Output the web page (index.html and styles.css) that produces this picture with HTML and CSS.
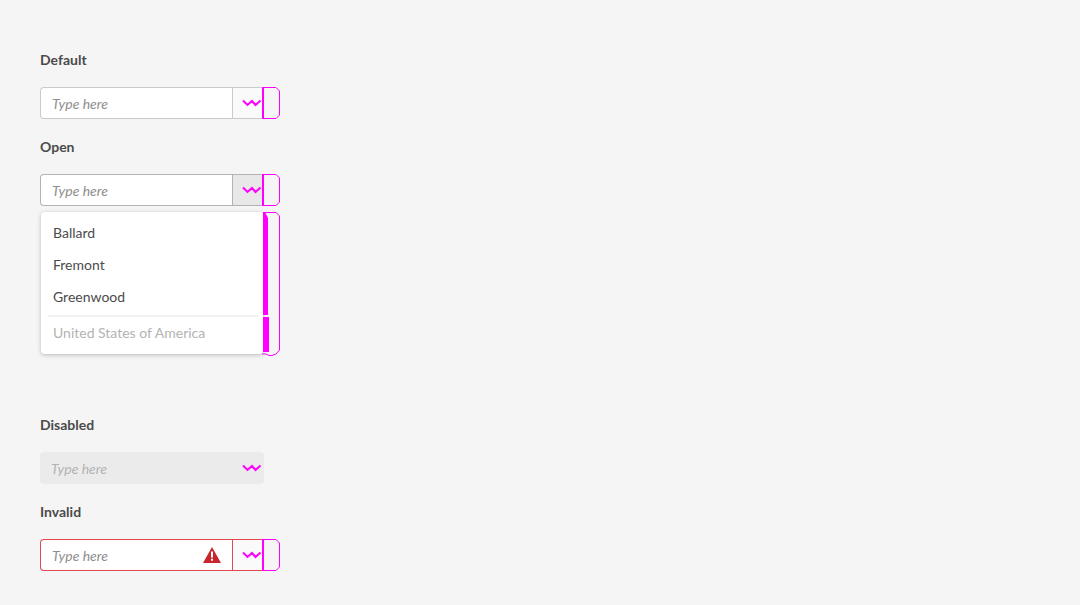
FILE: index.html
```html
<!DOCTYPE html>
<html lang="en">
<head>
<meta charset="UTF-8">
<title>Combobox</title>
<link rel="stylesheet" href="styles.css">
</head>
<body>
<svg class="defs" width="0" height="0">
	<symbol id="wave" viewBox="0 0 20 8"><path d="M1 1.5 L5.500 6 L10 2 L13.500 6 L18.500 1.500" fill="none" stroke="#ff00ff" stroke-width="2"/></symbol>
	<symbol id="cap" viewBox="0 0 18 32"><path d="M1 0.500 H14 L17.500 4 V28 L14 31.500 H1 M1 0.500 V31.500" fill="none" stroke="#ff00ff" stroke-width="1"/><path d="M1 0 V32" stroke="#ff00ff" stroke-width="2"/></symbol>
</svg>

<div class="page">
	<div class="field">
		<div class="label">Default</div>
		<div class="combo">
			<div class="input">Type here</div>
			<div class="btn"></div>
			<svg class="wave"><use href="#wave"/></svg>
			<svg class="cap"><use href="#cap"/></svg>
		</div>
	</div>

	<div class="field">
		<div class="label">Open</div>
		<div class="combo open">
			<div class="input">Type here</div>
			<div class="btn"></div>
			<svg class="wave"><use href="#wave"/></svg>
			<svg class="cap"><use href="#cap"/></svg>
		</div>
		<div class="menu">
			<div class="item">Ballard</div>
			<div class="item">Fremont</div>
			<div class="item">Greenwood</div>
			<div class="divider"></div>
			<div class="item muted">United States of America</div>
			<svg class="menu-mark" width="20" height="146" viewBox="0 0 20 146">
				<path d="M1 0.500 H14 L17.500 4 V8" fill="none" stroke="#ff00ff"/>
				<path d="M17.500 6 V138 L14 142 L10 143.500 H7 L4 142 H0" fill="none" stroke="#ff00ff"/>
				<path d="M1 1 H3.500 L6 6 V103 H1 Z M1 105 H7 V140 H1 Z" fill="#ff00ff"/>
			</svg>
		</div>
	</div>

	<div class="field">
		<div class="label">Disabled</div>
		<div class="combo disabled">
			<div class="input">Type here</div>
			<svg class="wave"><use href="#wave"/></svg>
		</div>
	</div>

	<div class="field">
		<div class="label">Invalid</div>
		<div class="combo invalid">
			<div class="input">
				Type here
				<svg class="alert" width="18" height="16" viewBox="0 0 18 16">
					<path d="M9 0 L18 16 H0 Z" fill="#c9252d"/>
					<path d="M8 4.500 H10 V10.500 H8 Z M8 11.800 H10 V13.800 H8 Z" fill="#fff"/>
				</svg>
			</div>
			<div class="btn"></div>
			<svg class="wave"><use href="#wave"/></svg>
			<svg class="cap"><use href="#cap"/></svg>
		</div>
	</div>
</div>
</body>
</html>
```

FILE: styles.css
```css
* {
	margin: 0;
	padding: 0;
	box-sizing: border-box;
}
html, body {
	width: 100%;
	height: 100%;
}
body {
	background-color: #f5f5f5;
	font-family: "Lato", "Open Sans", sans-serif;
	font-size: 14px;
	color: #4b4b4b;
	overflow: hidden;
}
.defs {
	display: block;
	height: 0;
}
.page {
	padding: 50px 0 0 40px;
}
.field {
	margin-bottom: 18px;
}
.label {
	height: 20px;
	line-height: 20px;
	font-weight: 700;
	margin-bottom: 17px;
}

.combo {
	position: relative;
	display: flex;
	width: 224px;
	height: 32px;
}
.input {
	flex: 1;
	display: flex;
	align-items: center;
	justify-content: space-between;
	padding: 0 11px;
	background: #fff;
	border: 1px solid #cacaca;
	border-right: 0;
	border-radius: 4px 0 0 4px;
	font-style: italic;
	color: #8e8e8e;
}
.btn {
	width: 32px;
	background: #fafafa;
	border: 1px solid #cacaca;
}
.wave {
	position: absolute;
	left: 202px;
	top: 12px;
	width: 20px;
	height: 8px;
}
.cap {
	position: absolute;
	left: 222px;
	top: 0;
	width: 18px;
	height: 32px;
}

.open .btn {
	background: #e8e8e8;
	border-color: #b3b3b3;
}
.open .input {
	border-color: #b3b3b3;
}

.disabled .input {
	border: 0;
	border-radius: 4px;
	background: #ebebeb;
	color: #b3b3b3;
}

.invalid .input, .invalid .btn {
	border-color: #e34850;
}

.menu {
	position: relative;
	width: 222px;
	height: 142px;
	margin: 6px 0 61px 1px;
	padding-top: 5px;
	background: #fff;
	border-radius: 4px;
	box-shadow: 0 1px 4px rgba(0,0,0,0.25);
}
.item {
	height: 32px;
	line-height: 32px;
	padding-left: 12px;
	color: #4b4b4b;
}
.muted {
	color: #b3b3b3;
}
.divider {
	height: 2px;
	margin: 2px 5px 0 7px;
	background: #f2f2f2;
}
.menu-mark {
	position: absolute;
	left: 221px;
	top: 0;
}
.alert {
	margin-right: 0;
}
```
